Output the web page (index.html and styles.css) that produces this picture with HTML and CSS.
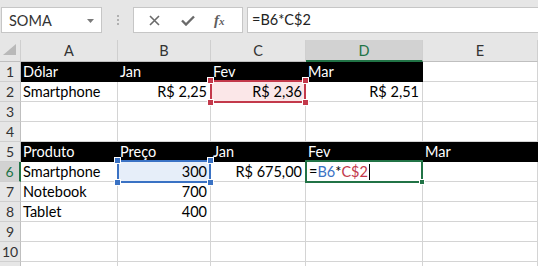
FILE: index.html
```html
<!DOCTYPE html>
<html lang="pt-BR">
<head>
<meta charset="utf-8">
<title>Planilha</title>
<link rel="stylesheet" href="styles.css">
</head>
<body>
	<div class="bar">
		<div class="namebox">
			<span>SOMA</span>
			<svg class="drop" width="7" height="4" viewBox="0 0 7 4"><path d="M0 0H7L3.5 4Z" fill="#7a7a7a"/></svg>
		</div>
		<div class="grip"><i></i><i></i><i></i></div>
		<div class="fxbox">
			<svg width="11" height="11" viewBox="0 0 11 11"><path d="M1 1L10 10M10 1L1 10" stroke="#6a6a6a" stroke-width="1.6"/></svg>
			<svg width="14" height="11" viewBox="0 0 14 11"><path d="M1 5.5L5 9.5L13 1.5" stroke="#6a6a6a" stroke-width="2.4" fill="none"/></svg>
			<span class="fx">f<small>x</small></span>
		</div>
		<div class="formula">=B6*C$2</div>
	</div>

	<div class="sheet">
		<div class="hd corner"><svg width="13" height="11" viewBox="0 0 13 11"><path d="M13 0V11H0Z" fill="#b9b9b9"/></svg></div>
		<div class="hd">A</div>
		<div class="hd">B</div>
		<div class="hd">C</div>
		<div class="hd on">D</div>
		<div class="hd">E</div>

		<div class="rh">1</div>
		<div class="c dark">Dólar</div>
		<div class="c dark">Jan</div>
		<div class="c dark">Fev</div>
		<div class="c dark">Mar</div>
		<div class="c"></div>

		<div class="rh">2</div>
		<div class="c">Smartphone</div>
		<div class="c num">R$ 2,25</div>
		<div class="c num ref-red">R$ 2,36<b class="box"></b><b class="h tl"></b><b class="h tr"></b><b class="h bl"></b><b class="h br"></b></div>
		<div class="c num">R$ 2,51</div>
		<div class="c"></div>

		<div class="rh">3</div>
		<div class="c"></div><div class="c"></div><div class="c"></div><div class="c"></div><div class="c"></div>

		<div class="rh">4</div>
		<div class="c"></div><div class="c"></div><div class="c"></div><div class="c"></div><div class="c"></div>

		<div class="rh">5</div>
		<div class="c dark">Produto</div>
		<div class="c dark">Preço</div>
		<div class="c dark">Jan</div>
		<div class="c dark">Fev</div>
		<div class="c dark">Mar</div>

		<div class="rh on">6</div>
		<div class="c">Smartphone</div>
		<div class="c num ref-blue">300<b class="box"></b><b class="h tl"></b><b class="h tr"></b><b class="h bl"></b><b class="h br"></b></div>
		<div class="c num">R$ 675,00</div>
		<div class="c edit">=<span class="blue">B6</span>*<span class="red">C$2</span><span class="caret"></span><b class="box"></b><b class="h br"></b></div>
		<div class="c"></div>

		<div class="rh">7</div>
		<div class="c">Notebook</div>
		<div class="c num">700</div>
		<div class="c"></div><div class="c"></div><div class="c"></div>

		<div class="rh">8</div>
		<div class="c">Tablet</div>
		<div class="c num">400</div>
		<div class="c"></div><div class="c"></div><div class="c"></div>

		<div class="rh">9</div>
		<div class="c"></div><div class="c"></div><div class="c"></div><div class="c"></div><div class="c"></div>

		<div class="rh">10</div>
		<div class="c"></div><div class="c"></div><div class="c"></div><div class="c"></div><div class="c"></div>

		<div class="rh"></div>
		<div class="c"></div><div class="c"></div><div class="c"></div><div class="c"></div><div class="c"></div>
	</div>
</body>
</html>
```
FILE: styles.css
```css
*{margin:0; padding:0; box-sizing:border-box;}
html,body{width:538px; height:266px; overflow:hidden;}
body{background:#fff; font-family:Lato, "Liberation Sans", sans-serif; font-size:14.5px; color:#000;}

.bar{display:flex; align-items:flex-start; height:40px; padding-top:7px; background:#e6e6e6;}
.namebox{display:flex; align-items:center; justify-content:space-between; width:101px; height:26px; margin-left:1px; padding:0 7px 0 7px; background:#fff; border:1px solid #c6c6c6; color:#333;}
.drop{margin-top:1px;}
.grip{display:flex; flex-direction:column; gap:2px; width:2px; margin:8px 14px 0 15px;}
.grip i{display:block; width:2px; height:2px; background:#b0b0b0;}
.fxbox{display:flex; align-items:center; gap:21px; width:110px; height:26px; padding-left:15px; background:#fff; border:1px solid #c6c6c6;}
.fx{font-family:"Liberation Serif", serif; font-style:italic; font-weight:bold; font-size:15px; color:#5e5e5e; margin-left:-2px;}
.fx small{font-size:11px;}
.formula{flex:1; height:26px; margin-left:4px; padding-left:4px; line-height:24px; background:#fff; border:1px solid #c6c6c6; border-right:none; color:#222;}

.sheet{display:grid; grid-template-columns:21px 97px 93px 95px 117px 1fr; grid-template-rows:22px; grid-auto-rows:20px;}
.hd{background:#e6e6e6; border-right:1px solid #cfcfcf; border-bottom:1px solid #bfbfbf; text-align:center; line-height:21px; color:#333;}
.hd.on{background:#d2d2d2; color:#217346; border-bottom:2px solid #217346;}
.corner{display:flex; align-items:flex-end; justify-content:flex-end; padding:0 4px 6px 0;}
.rh{background:#e6e6e6; border-right:1px solid #bfbfbf; border-bottom:1px solid #cfcfcf; text-align:center; line-height:20px; color:#333; font-size:14px;}
.rh.on{background:#d2d2d2; color:#217346; border-right:2px solid #217346;}

.c{position:relative; border-right:1px solid #d4d4d4; border-bottom:1px solid #d4d4d4; padding:0 2px 0 2px; line-height:19px; white-space:nowrap;}
.dark{background:#000; color:#fff; border-right-color:#000; border-bottom-color:#000;}
.num{text-align:right; padding-right:3px;}

.box{position:absolute; top:-2px; left:-1px; right:-1px; bottom:-2px; border:2px solid;}
.h{position:absolute; display:block; width:7px; height:7px; z-index:2; border:1px solid #fff;}
.tl{top:-5px; left:-4px;}
.tr{top:-5px; right:-4px;}
.bl{bottom:-5px; left:-4px;}
.br{bottom:-5px; right:-4px;}

.ref-red{background:#fbe7e8; z-index:1;}
.ref-red .box{border-color:#c3394b;}
.ref-red .h{background:#c3394b;}
.ref-blue{background:#e6eef9; z-index:1;}
.ref-blue .box{border-color:#3a72c4;}
.ref-blue .h{background:#3a72c4;}

.edit{z-index:1; padding-left:3px;}
.edit .box{border-color:#217346;}
.edit .h{background:#217346; width:6px; height:6px; bottom:-4px; right:-3px;}
.blue{color:#3a72c4;}
.red{color:#c3394b;}
.caret{display:inline-block; width:1px; height:16px; margin-left:1px; vertical-align:-3px; background:#000;}
```
